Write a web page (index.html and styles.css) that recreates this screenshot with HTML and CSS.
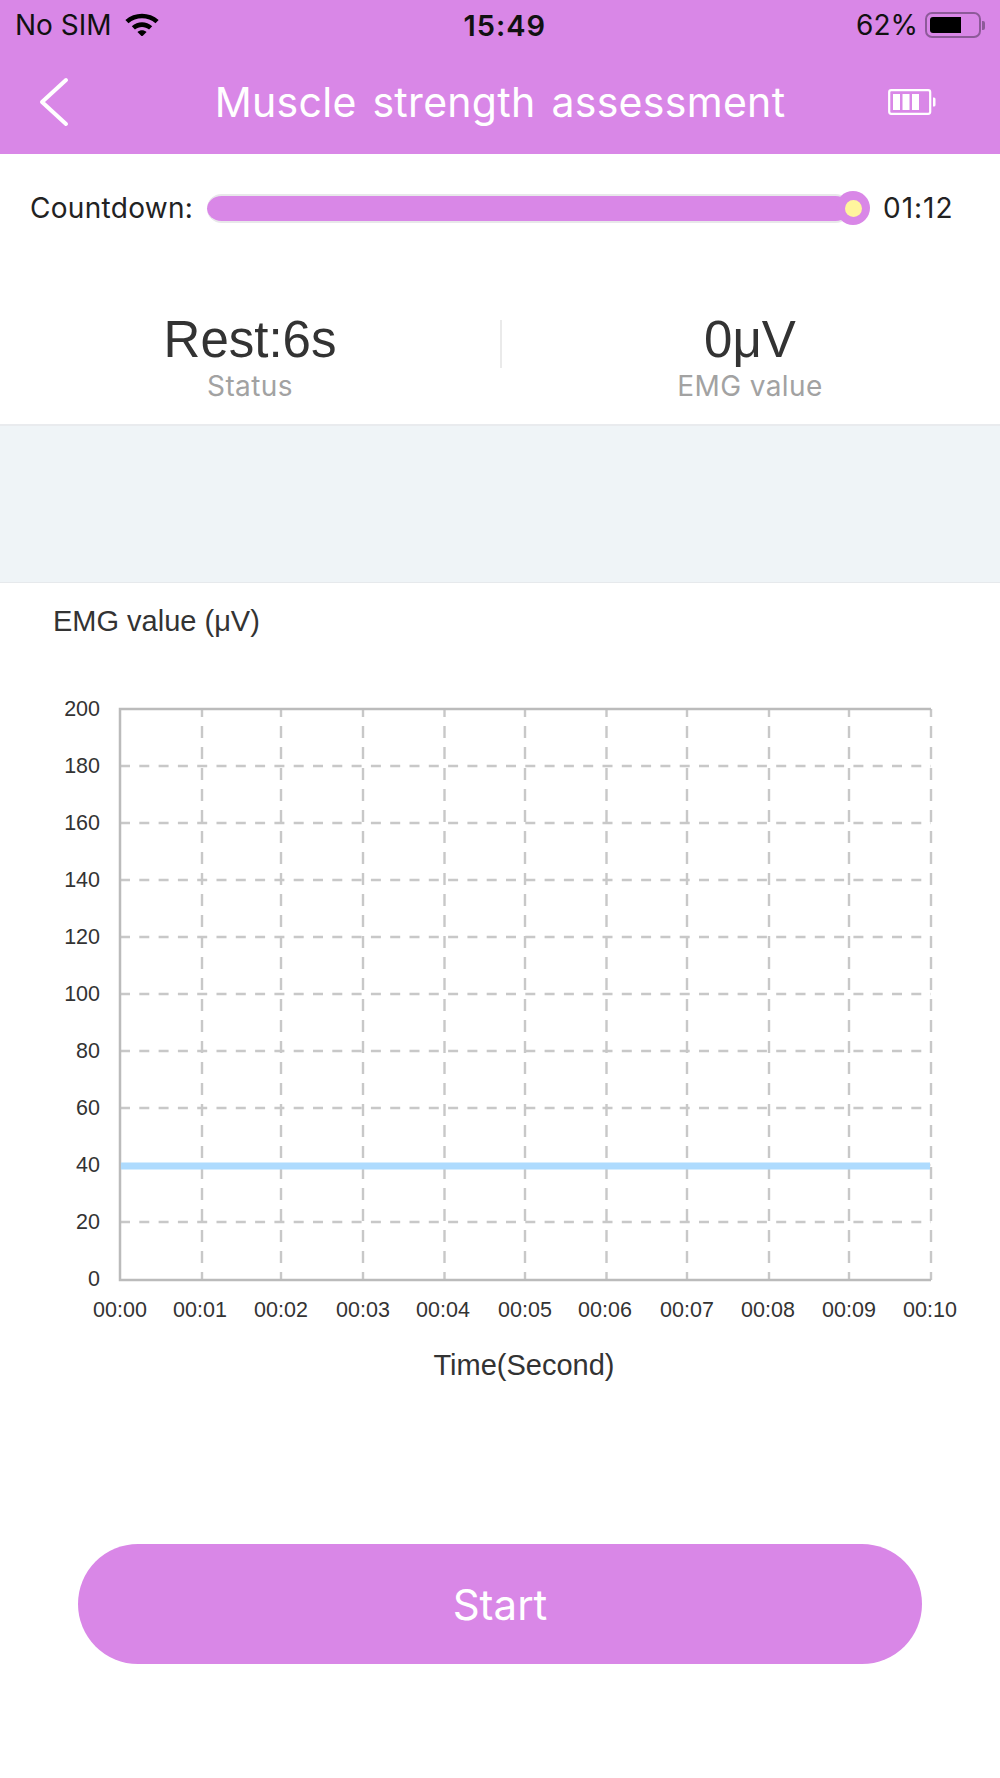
FILE: index.html
```html
<!DOCTYPE html>
<html lang="en">
<head>
    <meta charset="UTF-8">
    <meta name="viewport" content="width=device-width, initial-scale=1.0">
    <title>Muscle strength assessment</title>
    <link rel="stylesheet" href="styles.css">
</head>
<body>
    <header class="top">
        <div class="statusbar">
            <div class="sb-left">
                <span>No SIM</span>
                <svg class="wifi" width="36" height="26" viewBox="0 0 34 25">
                    <path d="M1 9.5C9.8 1.5 24.2 1.5 33 9.5L30 12.8C22.8 6.4 11.2 6.4 4 12.8Z"/>
                    <path d="M7.2 15.6C12.8 10.6 21.2 10.6 26.8 15.6L23.8 18.8C20 15.4 14 15.4 10.2 18.8Z"/>
                    <path d="M12.6 21.2C15.2 19 18.8 19 21.4 21.2L17 25.5Z"/>
                </svg>
            </div>
            <div class="sb-time">15:49</div>
            <div class="sb-right">
                <span>62%</span>
                <div class="batt"><div class="batt-fill"></div></div>
                <div class="batt-tip"></div>
            </div>
        </div>
        <div class="navbar">
            <svg class="back" width="30" height="50" viewBox="0 0 30 50">
                <path d="M27 3L3 25L27 47" fill="none" stroke="#fff" stroke-width="4" stroke-linecap="round" stroke-linejoin="round"/>
            </svg>
            <h1 class="title">Muscle strength assessment</h1>
            <svg class="device-batt" width="48" height="26" viewBox="0 0 48 26">
                <rect x="1.2" y="1.2" width="41" height="23.6" rx="2" fill="none" stroke="#fff" stroke-width="2.2"/>
                <rect x="5" y="5" width="7" height="16" fill="#fff"/>
                <rect x="14.5" y="5" width="7" height="16" fill="#fff"/>
                <rect x="24" y="5" width="7" height="16" fill="#fff"/>
                <path d="M45 8.5h1a1.5 1.5 0 0 1 1.5 1.5v6a1.5 1.5 0 0 1-1.5 1.5h-1z" fill="#fff"/>
            </svg>
        </div>
    </header>

    <div class="countdown">
        <span class="cd-label">Countdown:</span>
        <div class="track">
            <div class="knob"><div class="knob-dot"></div></div>
        </div>
        <span class="cd-time">01:12</span>
    </div>

    <div class="stats">
        <div class="stat">
            <div class="stat-value">Rest:6s</div>
            <div class="stat-label">Status</div>
        </div>
        <div class="stat-divider"></div>
        <div class="stat">
            <div class="stat-value">0μV</div>
            <div class="stat-label">EMG value</div>
        </div>
    </div>

    <div class="band"></div>

    <div class="chart-title">EMG value (μV)</div>
    <!-- viewBox starts at 670 so the numbers below read as page y -->
    <svg class="chart" width="1000" height="730" viewBox="0 670 1000 730">
        <path class="grid-h" d="M120 766H931M120 823H931M120 880H931M120 937H931M120 994H931M120 1051H931M120 1108H931M120 1165H931M120 1222H931"/>
        <path class="grid-v" d="M202 709V1280M281 709V1280M363 709V1280M444.5 709V1280M525 709V1280M606.5 709V1280M687 709V1280M769 709V1280M849 709V1280M931 709V1280"/>
        <path class="axis" d="M931 709H120V1280H931"/>
        <rect class="series" x="121" y="1162.5" width="809" height="7"/>
        <g class="y-labels">
            <text x="100" y="716">200</text>
            <text x="100" y="773">180</text>
            <text x="100" y="830">160</text>
            <text x="100" y="887">140</text>
            <text x="100" y="944">120</text>
            <text x="100" y="1001">100</text>
            <text x="100" y="1058">80</text>
            <text x="100" y="1115">60</text>
            <text x="100" y="1172">40</text>
            <text x="100" y="1229">20</text>
            <text x="100" y="1286">0</text>
        </g>
        <g class="x-labels">
            <text x="120" y="1317">00:00</text>
            <text x="200" y="1317">00:01</text>
            <text x="281" y="1317">00:02</text>
            <text x="363" y="1317">00:03</text>
            <text x="443" y="1317">00:04</text>
            <text x="525" y="1317">00:05</text>
            <text x="605" y="1317">00:06</text>
            <text x="687" y="1317">00:07</text>
            <text x="768" y="1317">00:08</text>
            <text x="849" y="1317">00:09</text>
            <text x="930" y="1317">00:10</text>
        </g>
        <text class="x-title" x="524" y="1375">Time(Second)</text>
    </svg>

    <div class="action">
        <button class="start">Start</button>
    </div>
</body>
</html>
```

FILE: styles.css
```css
* { box-sizing: border-box; }
html, body { margin: 0; padding: 0; }
body { width: 1000px; height: 1778px; background: #fff; font-family: Inter, "Noto Sans", sans-serif; color: #222; overflow: hidden; }

.top { height: 154px; background: #d987e7; }
.statusbar { height: 50px; display: flex; align-items: center; justify-content: space-between; padding: 0 15px 0 15px; font-size: 28px; color: #111; }
.sb-left { display: flex; align-items: center; gap: 12px; }
.wifi { fill: #000; margin-top: -4px; }
.sb-time { font-size: 29px; font-weight: 600; letter-spacing: 1px; margin-left: -6px; }
.sb-right { display: flex; align-items: center; }
.batt { width: 56px; height: 26px; border: 2px solid #8d5a99; border-radius: 7px; padding: 3px; margin-left: 7px; }
.batt-fill { width: 31px; height: 100%; background: #000; border-radius: 3px 0 0 3px; }
.batt-tip { width: 3px; height: 9px; background: #8d5a99; border-radius: 0 2px 2px 0; margin-left: 1px; }

.navbar { height: 104px; display: flex; align-items: center; padding: 0 64px 0 39px; }
.title { flex: 1; margin: 0 0 0 43px; text-align: center; font-size: 41px; font-weight: 400; color: #fff; word-spacing: 4px; letter-spacing: 0.3px; }

.countdown { height: 100px; display: flex; align-items: center; padding: 8px 0 0 30px; font-size: 28px; letter-spacing: 0.3px; color: #222; }
.cd-label { width: 177px; }
.track { width: 643px; height: 29px; background: #d987e7; border-radius: 15px; border: solid #e8e8ea; border-width: 2px 0; display: flex; justify-content: flex-end; align-items: center; }
.knob { width: 34px; height: 34px; border-radius: 50%; background: #d987e7; display: flex; align-items: center; justify-content: center; margin-right: -20px; flex: none; }
.knob-dot { width: 17px; height: 17px; border-radius: 50%; background: #fff59d; }
.cd-time { margin-left: 33px; letter-spacing: 1px; }

.stats { height: 170px; display: flex; align-items: flex-start; padding-top: 56px; }
.stat { width: 500px; flex: none; text-align: center; }
.stat-value { font-family: "Liberation Sans", sans-serif; font-size: 51px; line-height: 60px; color: #333; }
.stat-label { font-size: 28px; line-height: 32px; letter-spacing: 0.4px; color: #a2a2a2; }
.stat-divider { width: 2px; height: 48px; margin: 10px -2px 0 0; background: #eaeaea; flex: none; }

.band { height: 159px; background: #eff4f7; border-top: 2px solid #e9ebee; border-bottom: 1px solid #e6e9ec; }

.chart-title { height: 87px; padding: 20px 0 0 53px; font-family: "Liberation Sans", sans-serif; font-size: 29px; line-height: 36px; color: #333; }
.chart { display: block; font-family: "Liberation Sans", sans-serif; }
.grid-h, .grid-v { fill: none; stroke: #c8c8c8; stroke-width: 2.4; }
.grid-h { stroke-dasharray: 10 9.3; }
.grid-v { stroke-dasharray: 12 9; stroke-dashoffset: 4; }
.axis { fill: none; stroke: #bbb; stroke-width: 2.5; }
.series { fill: #aedbfe; }
.y-labels text { font-size: 21.5px; text-anchor: end; fill: #333; }
.x-labels text { font-size: 21.5px; text-anchor: middle; fill: #333; }
.x-title { font-size: 29px; text-anchor: middle; fill: #333; }

.action { padding: 144px 78px 0; }
.start { display: block; width: 100%; height: 120px; border: 0; border-radius: 60px; background: #d987e7; color: #fff; font-family: Inter, "Noto Sans", sans-serif; font-size: 42px; }
```
